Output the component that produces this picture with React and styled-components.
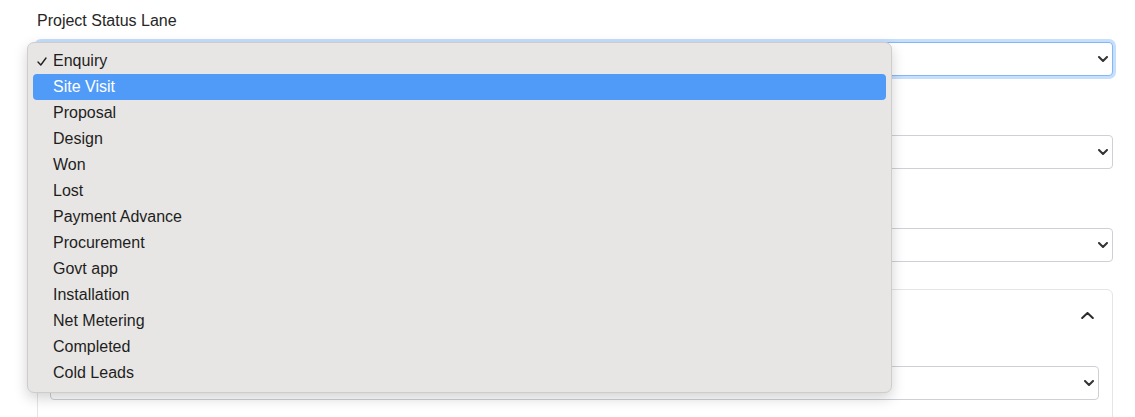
import styled, { createGlobalStyle } from "styled-components";

const stages = [
  "Enquiry",
  "Site Visit",
  "Proposal",
  "Design",
  "Won",
  "Lost",
  "Payment Advance",
  "Procurement",
  "Govt app",
  "Installation",
  "Net Metering",
  "Completed",
  "Cold Leads",
];

const ChevronDown = () => (
  <svg width="10" height="6" viewBox="0 0 10 6" fill="none">
    <path d="M1 1l4 4 4-4" stroke="#333" strokeWidth="2" strokeLinecap="round" strokeLinejoin="round" />
  </svg>
);

const ChevronUp = () => (
  <svg width="13" height="7" viewBox="0 0 13 7" fill="none">
    <path d="M1.2 6L6.5 1l5.3 5" stroke="#2b2b2b" strokeWidth="2" strokeLinecap="round" strokeLinejoin="round" />
  </svg>
);

const CheckMark = () => (
  <svg width="10" height="9" viewBox="0 0 10 9" fill="none">
    <path d="M1 5l2.8 3L9 1" stroke="#222" strokeWidth="1.4" strokeLinecap="round" strokeLinejoin="round" />
  </svg>
);

const Select = ({ focused }) => (
  <SelectBox $focused={focused}>
    <ChevronDown />
  </SelectBox>
);

const App = () => {
  const current = "Enquiry";
  const hover = "Site Visit";

  return (
    <>
      <GlobalStyle />
      <Page>
        <Field>
          <Label>Project Status Lane</Label>
          <SelectWrap>
            <Select focused />
            <Menu>
              {stages.map((s) => (
                <Option key={s} $active={s === hover}>
                  <Check>{s === current && <CheckMark />}</Check>
                  {s}
                </Option>
              ))}
            </Menu>
          </SelectWrap>
        </Field>
        <Field>
          <Label>Lead Source</Label>
          <Select />
        </Field>
        <Field>
          <Label>Assigned To</Label>
          <Select />
        </Field>
        <Card>
          <CardHeader>
            <CardTitle>Customer Details</CardTitle>
            <ChevronUp />
          </CardHeader>
          <CardBody>
            <Label $tight>Customer Type</Label>
            <Select />
          </CardBody>
        </Card>
      </Page>
    </>
  );
};

export default App;

const GlobalStyle = createGlobalStyle`
  body {
    margin: 0;
    background: #fff;
    font-family: "Liberation Sans", Arial, sans-serif;
    color: #222;
    overflow: hidden;
  }
`;

const Page = styled.div`
  padding: 10px 22px 0 37px;
`;

const Field = styled.div`
  margin-bottom: 27px;
`;

const Label = styled.div`
  font-size: 16px;
  line-height: 22px;
  color: #262626;
  margin-bottom: ${(p) => (p.$tight ? "4px" : "10px")};
`;

const SelectWrap = styled.div`
  position: relative;
`;

const SelectBox = styled.div`
  height: 34px;
  box-sizing: border-box;
  display: flex;
  align-items: center;
  justify-content: flex-end;
  padding-right: 4px;
  background: #fff;
  border: 1px solid ${(p) => (p.$focused ? "#86b7f5" : "#cdd0d6")};
  border-radius: 4px;
  box-shadow: ${(p) => (p.$focused ? "0 0 0 3px #c5dffc" : "none")};
`;

const Menu = styled.div`
  position: absolute;
  top: 0;
  left: -10px;
  width: 865px;
  box-sizing: border-box;
  padding: 5px 5px 6px;
  background: #e8e6e4;
  border: 1px solid #cfcdcb;
  border-radius: 7px;
  box-shadow: 0 5px 14px rgba(0, 0, 0, 0.18);
  z-index: 10;
`;

const Option = styled.div`
  height: 26px;
  display: flex;
  align-items: center;
  border-radius: 4px;
  font-size: 16px;
  color: ${(p) => (p.$active ? "#fff" : "#1e1e1e")};
  background: ${(p) => (p.$active ? "#4f9bf7" : "transparent")};
`;

const Check = styled.span`
  width: 20px;
  padding-left: 4px;
  box-sizing: border-box;
  display: flex;
  align-items: center;
`;

const Card = styled.div`
  border: 1px solid #e3e5e9;
  border-radius: 6px;
  height: 160px;
`;

const CardHeader = styled.div`
  height: 50px;
  display: flex;
  align-items: center;
  justify-content: space-between;
  padding: 0 18px 0 13px;
`;

const CardTitle = styled.div`
  font-size: 16px;
  font-weight: 600;
`;

const CardBody = styled.div`
  padding: 0 13px 0 12px;
`;
